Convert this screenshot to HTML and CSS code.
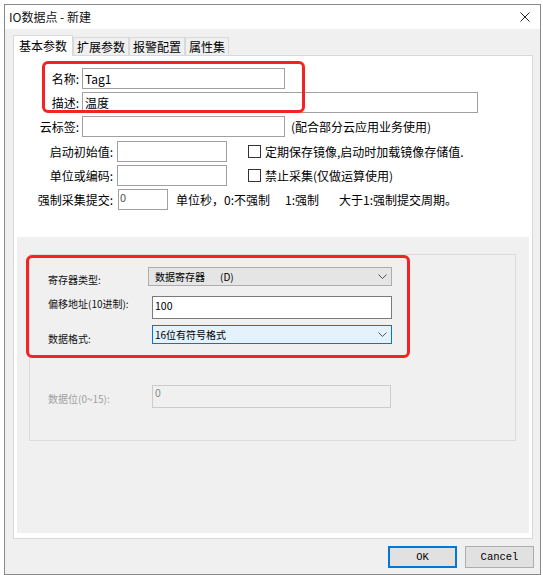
FILE: index.html
```html
<!DOCTYPE html>
<html lang="zh-CN">
<head>
<meta charset="utf-8">
<title>IO数据点 - 新建</title>
<link rel="stylesheet" href="styles.css">
</head>
<body>
<div class="window">
  <div class="titlebar">
    <span class="title">IO数据点 - 新建</span>
    <svg class="close" width="10" height="10" viewBox="0 0 10 10"><path d="M0.5 0.5L9.5 9.5M9.5 0.5L0.5 9.5" stroke="#222" stroke-width="1" fill="none"/></svg>
  </div>
  <div class="client">
    <div class="tabs">
      <div class="tab active">基本参数</div>
      <div class="tab">扩展参数</div>
      <div class="tab">报警配置</div>
      <div class="tab">属性集</div>
    </div>
    <div class="panel">
      <div class="form">
        <div class="row">
          <span class="lbl w1">名称:</span>
          <div class="edit e-name">Tag1</div>
        </div>
        <div class="row">
          <span class="lbl w1">描述:</span>
          <div class="edit e-desc">温度</div>
        </div>
        <div class="row">
          <span class="lbl w1">云标签:</span>
          <div class="edit e-name"></div>
          <span class="note">(配合部分云应用业务使用)</span>
        </div>
        <div class="row r4">
          <span class="lbl w2">启动初始值:</span>
          <div class="edit e-init"></div>
          <span class="chk"></span>
          <span class="chk-text">定期保存镜像,启动时加载镜像存储值.</span>
        </div>
        <div class="row">
          <span class="lbl w2">单位或编码:</span>
          <div class="edit e-init"></div>
          <span class="chk"></span>
          <span class="chk-text">禁止采集(仅做运算使用)</span>
        </div>
        <div class="row">
          <span class="lbl w2">强制采集提交:</span>
          <div class="edit e-force">0</div>
          <span class="hint">单位秒，0:不强制</span>
          <span class="hint h2">1:强制</span>
          <span class="hint h3">大于1:强制提交周期。</span>
        </div>
      </div>
      <div class="lower">
        <div class="group">
          <div class="grow ga">
            <span class="glbl">寄存器类型:</span>
            <div class="combo c-reg"><span class="ctext">数据寄存器</span><span class="csuffix">(D)</span>
              <svg class="chev" width="9" height="5" viewBox="0 0 9 5"><path d="M0.5 0.5L4.5 4.5L8.5 0.5" stroke="#555" stroke-width="1" fill="none"/></svg>
            </div>
          </div>
          <div class="grow gb">
            <span class="glbl">偏移地址(10进制):</span>
            <div class="gedit">100</div>
          </div>
          <div class="grow gc">
            <span class="glbl">数据格式:</span>
            <div class="combo c-fmt"><span class="ctext">16位有符号格式</span>
              <svg class="chev" width="9" height="5" viewBox="0 0 9 5"><path d="M0.5 0.5L4.5 4.5L8.5 0.5" stroke="#555" stroke-width="1" fill="none"/></svg>
            </div>
          </div>
          <div class="grow gd">
            <span class="glbl disabled">数据位(0~15):</span>
            <div class="gedit off">0</div>
          </div>
        </div>
      </div>
    </div>
    <div class="buttons">
      <div class="btn default">OK</div>
      <div class="btn">Cancel</div>
    </div>
  </div>
  <div class="mark mark1"></div>
  <div class="mark mark2"></div>
</div>
</body>
</html>
```
FILE: styles.css
```css
html, body {
  margin: 0;
  padding: 0;
  background: #fff;
}
body {
  font-family: "Noto Sans CJK SC", "Noto Sans", sans-serif;
  font-size: 12px;
  color: #000;
}
.window {
  position: relative;
  margin: 4px 0 0 4px;
  width: 537px;
  height: 571px;
  box-sizing: border-box;
  border: 1px solid #8a8a8a;
  background: #f0f0f0;
  display: flex;
  flex-direction: column;
}
.titlebar {
  height: 24px;
  flex: none;
  background: #fff;
  display: flex;
  align-items: center;
  padding-left: 4px;
}
.title {
  flex: 1;
  font-size: 12px;
  line-height: 14px;
  color: #111;
}
.close {
  margin-right: 10px;
}
.client {
  flex: 1;
  display: flex;
  flex-direction: column;
}
.tabs {
  display: flex;
  align-items: flex-end;
  height: 20px;
  margin-top: 6px;
  padding-left: 8px;
}
.tab {
  height: 18px;
  box-sizing: border-box;
  border: 1px solid #d9d9d9;
  border-bottom: none;
  padding: 0 3px;
  line-height: 17px;
  background: #f0f0f0;
  white-space: nowrap;
}
.tab.active {
  height: 21px;
  line-height: 19px;
  padding: 0 5px;
  background: #fff;
  margin-bottom: -1px;
  position: relative;
  z-index: 1;
}
.panel {
  margin-left: 8px;
  width: 520px;
  height: 484px;
  box-sizing: border-box;
  border: 1px solid #d9d9d9;
  background: #fff;
  display: flex;
  flex-direction: column;
}
.form {
  padding-top: 12px;
  display: flex;
  flex-direction: column;
  gap: 3px;
}
.row {
  display: flex;
  align-items: center;
  height: 21px;
}
.row.r4 {
  margin-top: 1px;
}
.lbl {
  flex: none;
  text-align: right;
  white-space: nowrap;
  line-height: 14px;
}
.lbl.w1 {
  width: 65px;
  margin-right: 3px;
}
.lbl.w2 {
  width: 99px;
  margin-right: 4px;
}
.edit {
  flex: none;
  height: 21px;
  box-sizing: border-box;
  border: 1px solid #a0a0a0;
  background: #fff;
  padding-left: 2px;
  line-height: 19px;
  white-space: nowrap;
}
.e-name { width: 203px; }
.e-desc { width: 396px; }
.e-init { width: 110px; }
.e-force {
  width: 50px;
  margin-left: 1px;
  line-height: 12px;
  font-size: 11px;
  padding: 1px 0 0 1px;
  color: #555;
}
.note {
  margin-left: 6px;
  white-space: nowrap;
}
.chk {
  flex: none;
  width: 13px;
  height: 13px;
  box-sizing: border-box;
  border: 1px solid #333;
  background: #fff;
  margin-left: 21px;
  margin-right: 4px;
}
.chk-text {
  white-space: nowrap;
}
.hint {
  margin-left: 8px;
  white-space: nowrap;
}
.hint.h2 {
  margin-left: 15px;
}
.hint.h3 {
  margin-left: 20px;
}
.lower {
  margin: 27px 3px 0 3px;
  height: 296px;
  box-sizing: border-box;
  background: #f0f0f0;
  padding: 17px 0 0 12px;
}
.group {
  width: 487px;
  height: 187px;
  box-sizing: border-box;
  border: 1px solid #dcdcdc;
  padding: 12px 0 0 18px;
}
.grow {
  display: flex;
  align-items: flex-start;
}
.glbl {
  flex: none;
  width: 104px;
  font-size: 10px;
  line-height: 14px;
  white-space: nowrap;
  color: #111;
}
.glbl.disabled {
  color: #a0a0a0;
}
.ga .glbl { margin-top: 6px; }
.gb { margin-top: 9px; }
.gb .glbl { margin-top: 1px; }
.gc { margin-top: 6px; }
.gc .glbl { margin-top: 7px; }
.gd { margin-top: 39px; }
.gd .glbl { margin-top: 7px; }
.combo {
  flex: none;
  height: 19px;
  box-sizing: border-box;
  border: 1px solid #adadad;
  background: #e5e5e5;
  display: flex;
  align-items: center;
  font-size: 10px;
  line-height: 14px;
  white-space: nowrap;
}
.c-reg {
  width: 244px;
  margin-left: -4px;
  padding-left: 6px;
}
.c-fmt {
  width: 240px;
  padding-left: 2px;
  background: #e5f1fb;
  border-color: #0078d7;
}
.csuffix {
  margin-left: 15px;
}
.chev {
  margin-left: auto;
  margin-right: 4px;
}
.gedit {
  flex: none;
  width: 240px;
  height: 23px;
  box-sizing: border-box;
  border: 1px solid #7a7a7a;
  background: #fff;
  padding-left: 2px;
  font-size: 10.5px;
  line-height: 17px;
}
.gedit.off {
  width: 239px;
  border-color: #cccccc;
  background: #f0f0f0;
  color: #8a8a8a;
  line-height: 12px;
  padding-top: 1px;
}
.buttons {
  display: flex;
  justify-content: flex-end;
  gap: 8px;
  margin-top: 7px;
  padding-right: 6px;
}
.btn {
  width: 69px;
  height: 22px;
  box-sizing: border-box;
  border: 1px solid #adadad;
  background: #e1e1e1;
  font-family: "Liberation Mono", monospace;
  font-size: 10.5px;
  display: flex;
  align-items: center;
  justify-content: center;
}
.btn.default {
  border: 2px solid #0078d7;
}
.mark {
  position: absolute;
  box-sizing: border-box;
  border: 3px solid #f52222;
  border-radius: 6px;
  pointer-events: none;
}
.mark1 {
  left: 37px;
  top: 56px;
  width: 263px;
  height: 52px;
}
.mark2 {
  left: 21px;
  top: 250px;
  width: 384px;
  height: 103px;
}
```
